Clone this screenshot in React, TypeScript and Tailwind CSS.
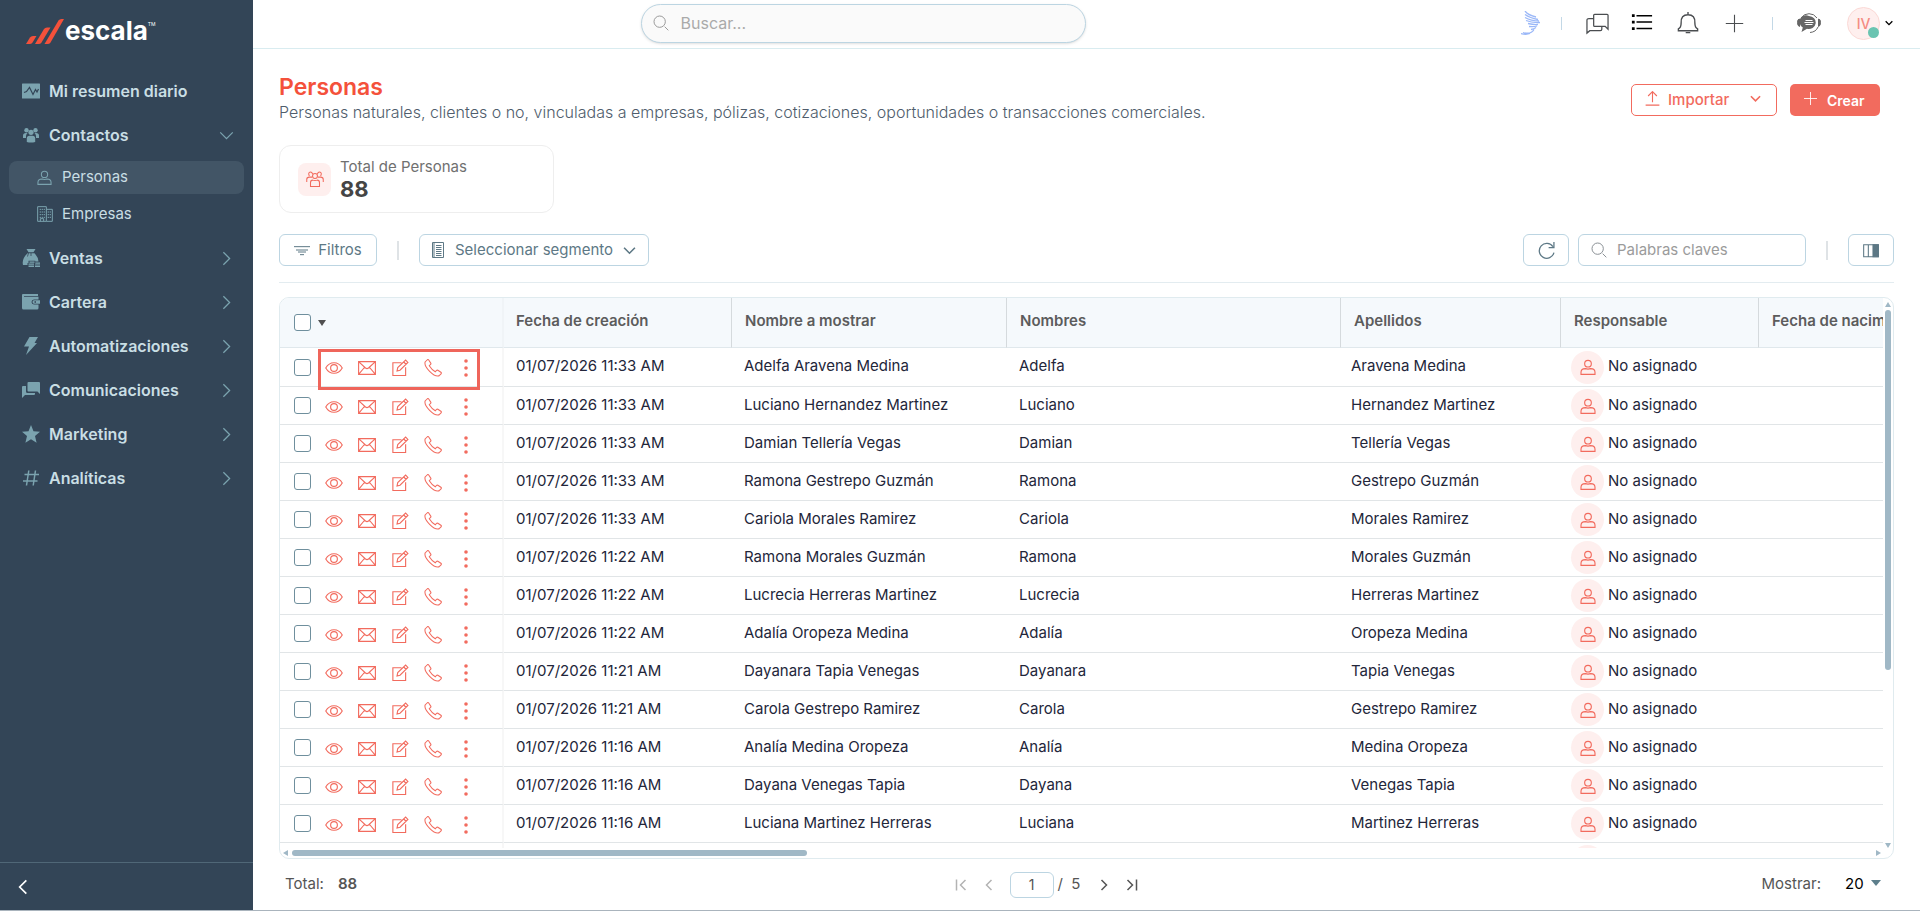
import type { ReactNode } from 'react';

const menu = [
    { label: 'Mi resumen diario', icon: 'chart', state: 'none' },
    { label: 'Contactos', icon: 'people', state: 'open' },
    { label: 'Ventas', icon: 'bag', state: 'closed' },
    { label: 'Cartera', icon: 'wallet', state: 'closed' },
    { label: 'Automatizaciones', icon: 'bolt', state: 'closed' },
    { label: 'Comunicaciones', icon: 'chat', state: 'closed' },
    { label: 'Marketing', icon: 'star', state: 'closed' },
    { label: 'Analíticas', icon: 'hash', state: 'closed' },
];

const people = [
    { date: '01/07/2026 11:33 AM', first: 'Adelfa', last: 'Aravena Medina' },
    { date: '01/07/2026 11:33 AM', first: 'Luciano', last: 'Hernandez Martinez' },
    { date: '01/07/2026 11:33 AM', first: 'Damian', last: 'Tellería Vegas' },
    { date: '01/07/2026 11:33 AM', first: 'Ramona', last: 'Gestrepo Guzmán' },
    { date: '01/07/2026 11:33 AM', first: 'Cariola', last: 'Morales Ramirez' },
    { date: '01/07/2026 11:22 AM', first: 'Ramona', last: 'Morales Guzmán' },
    { date: '01/07/2026 11:22 AM', first: 'Lucrecia', last: 'Herreras Martinez' },
    { date: '01/07/2026 11:22 AM', first: 'Adalía', last: 'Oropeza Medina' },
    { date: '01/07/2026 11:21 AM', first: 'Dayanara', last: 'Tapia Venegas' },
    { date: '01/07/2026 11:21 AM', first: 'Carola', last: 'Gestrepo Ramirez' },
    { date: '01/07/2026 11:16 AM', first: 'Analía', last: 'Medina Oropeza' },
    { date: '01/07/2026 11:16 AM', first: 'Dayana', last: 'Venegas Tapia' },
    { date: '01/07/2026 11:16 AM', first: 'Luciana', last: 'Martinez Herreras' },
    { date: '', first: '', last: '' },
];

const headers = ['Fecha de creación', 'Nombre a mostrar', 'Nombres', 'Apellidos', 'Responsable', 'Fecha de nacimiento'];

function Line({ className, children, width = 1 }: { className: string; children: ReactNode; width?: number }) {
    return (
        <svg viewBox="0 0 24 24" fill="none" stroke="currentColor" strokeWidth={width} className={`shrink-0 ${className}`} aria-hidden="true">
            {children}
        </svg>
    );
}

function Solid({ className, children }: { className: string; children: ReactNode }) {
    return (
        <svg viewBox="0 0 18 18" fill="currentColor" className={`shrink-0 ${className}`} aria-hidden="true">
            {children}
        </svg>
    );
}

function Chevron({ dir, className, width = 2 }: { dir: 'down' | 'right' | 'left'; className: string; width?: number }) {
    const d = { down: 'M2 7l10 10L22 7', right: 'M7 2l10 10L7 22', left: 'M17 2L7 12l10 10' }[dir];
    return <Line className={className} width={width}><path d={d} /></Line>;
}

function MenuIcon({ name }: { name: string }) {
    const box = 'size-[18px]';
    switch (name) {
        case 'chart':
            return (
                <Solid className={box}>
                    <rect y="1.5" width="18" height="15" rx="0.5" />
                    <path d="M2 10.5l2.5-1 3-4 3.5 7 2.5-5 1.5 2.5 1.5-3" fill="none" stroke="#334557" strokeWidth="1.2" />
                </Solid>
            );
        case 'people':
            return (
                <Solid className={box}>
                    <circle cx="4.5" cy="4.2" r="2.2" />
                    <circle cx="13.5" cy="4.2" r="2.2" />
                    <path d="M1 12V9.5Q1 7 4 7l1.5.3Q4 8.500 4 10v2zM17 12V9.500Q17 7 14 7l-1.5.3Q14 8.500 14 10v2z" />
                    <circle cx="9" cy="6.300" r="2.600" />
                    <path d="M4.800 16v-3.500Q4.800 9.800 7.500 9.800h3q2.700 0 2.700 2.700V16q-4.200 1.200-8.400 0z" />
                </Solid>
            );
        case 'bag':
            return (
                <Solid className={box}>
                    <path d="M4.500 0h9l-2 3.300h-5zM5.500 4.200h7q4 4.300 4 8.300h-3.200v-.8H6.500V14h-1v2H1Q-.5 10 5.500 4.200z" />
                    <path d="M7.500 12.500h5v1.300h-5zM13.300 13.500H18v1.300h-4.700zM6.500 14.600h5.500v1.200H6.500zM6.500 16.500h5.500V18H6.500zM13 15.500h5v1h-5zM13 17.100h5v.9h-5z" />
                    <path d="M6.500 4l-1 3.500M9 4v3" stroke="#334557" strokeWidth=".8" />
                </Solid>
            );
        case 'wallet':
            return (
                <Solid className={box}>
                    <path d="M1 1h15v2H2v.8h14.500v2.700H12Q9.500 6.700 9.500 9t2.500 2.500h4.500V15q0 1.500-1.500 1.500H1.500Q0 16.500 0 15V2q0-1 1-1z" />
                    <path fillRule="evenodd" d="M12 7.300h6v3.500h-6Q10.500 10.500 10.500 9T12 7.300zm.5 1v1.500H14V8.300z" />
                </Solid>
            );
        case 'bolt':
            return <Solid className={box}><path d="M7.500 0H16l-3.500 6H15L4 18l3-8.500H2z" /></Solid>;
        case 'chat':
            return (
                <Solid className={box}>
                    <path d="M6.500 1H17q1 0 1 1v11l-2.500-2.500h-9q-1 0-1-1V2q0-1 1-1z" />
                    <path d="M1 5h3v5.500Q4 12 5.500 12H13v1q0 1-1 1H3l-3 3V6q0-1 1-1z" />
                </Solid>
            );
        case 'star':
            return <Solid className={box}><path d="M9 0l2.500 6.200 6.500.5-5 4.300 1.600 6.700L9 14.200l-5.600 3.500L5 11 0 6.700l6.500-.5z" /></Solid>;
        default:
            return (
                <Solid className={box}>
                    <path d="M6.800 1.500L4.500 16.500M13.500 1.500l-2.300 15M2.500 5.500h14.500M1 12h14.500" fill="none" stroke="currentColor" strokeWidth="1.500" />
                </Solid>
            );
    }
}

function UserIcon({ className }: { className: string }) {
    return (
        <Line className={className} width={1.7}>
            <circle cx="12" cy="7" r="5" />
            <path d="M1.500 23v-3Q1.500 14.500 8 14.500q4 1.200 8 0 6.500 0 6.500 5.500v3z" />
        </Line>
    );
}

function SearchIcon({ className }: { className: string }) {
    return (
        <Line className={className} width={1.500}>
            <circle cx="10" cy="10" r="8.500" />
            <path d="M17.500 17.500L23 23" />
        </Line>
    );
}

function Sidebar() {
    return (
        <aside className="flex w-[253px] shrink-0 flex-col bg-[#334557]">
            <div className="flex h-[62px] items-center pl-[26px]">
                <svg viewBox="0 0 38 25" className="h-[25px] w-[38px]" fill="#f4513b" aria-hidden="true">
                    <path d="M0 25L4 18.500q1-1.500 3-1.500h3.500L6.500 23.500Q5.500 25 3.500 25z" />
                    <path d="M9 25L18 10q1-1.500 3-1.500h3.500L15.500 23.500Q14.500 25 12.500 25z" />
                    <path d="M18.500 25L32.500 1.500Q33.500 0 35.500 0H38L24.500 23.500Q23.500 25 21.500 25z" />
                </svg>
                <span className="ml-px text-[26px] leading-8 font-bold text-white">escala</span>
                <span className="mb-3 text-[5px] text-white">TM</span>
            </div>

            <nav className="mt-[7px] flex flex-1 flex-col">
                {menu.map((item) => (
                    <div key={item.label}>
                        <button type="button" className="flex h-11 w-full items-center pr-[19px] pl-[22px] text-[#c9dee4]">
                            <span className="text-[#7ba3af]"><MenuIcon name={item.icon} /></span>
                            <span className="ml-[9px] flex-1 text-left text-[16px] font-semibold">{item.label}</span>
                            {item.state !== 'none' && (
                                <Chevron dir={item.state === 'open' ? 'down' : 'right'} className="size-[15px] text-[#7ba3af]" />
                            )}
                        </button>
                        {item.state === 'open' && (
                            <div className="px-[9px] pt-1 pb-1">
                                <a href="#personas" className="flex h-[33px] items-center rounded-lg bg-[#425566] pl-7 text-[15px] text-[#c9dee4]">
                                    <UserIcon className="size-[15px] text-[#7ba3af]" />
                                    <span className="ml-[10px]">Personas</span>
                                </a>
                                <a href="#empresas" className="mt-[3px] mb-px flex h-[34px] items-center pl-7 text-[15px] text-[#c9dee4]">
                                    <Line className="size-4 text-[#7ba3af]" width={1.500}>
                                        <path d="M1 1h13v22H1zM14 5h9v18h-9M5 23v-4h5v4" />
                                        <path d="M4 5h8M4 9h8M4 13h8M4 17h8M16 9h5M16 13h5M16 17h5" strokeDasharray="2 1" />
                                    </Line>
                                    <span className="ml-[9px]">Empresas</span>
                                </a>
                            </div>
                        )}
                    </div>
                ))}
            </nav>

            <div className="flex h-12 items-center border-t border-[#506777] pl-[15px]">
                <button type="button" aria-label="Contraer menú" className="text-white">
                    <Chevron dir="left" className="size-4" width={2.500} />
                </button>
            </div>
        </aside>
    );
}

function TopBar() {
    return (
        <header className="flex h-[49px] shrink-0 items-center border-b border-[#d9ecf0]">
            <div className="flex flex-1 justify-center pr-[36px]">
                <label className="mb-[2px] flex h-[39px] w-[445px] items-center rounded-full border border-[#bcd5e2] bg-[#fafafa] pl-[11px] shadow-sm">
                    <SearchIcon className="size-4 text-[#9a9a9a]" />
                    <input aria-label="Buscar" placeholder="Buscar..." className="ml-3 flex-1 bg-transparent text-[16px] outline-none placeholder:text-[#aaaaaa]" />
                </label>
            </div>
            <div className="flex w-[411px] items-center pb-[2px] text-[#4a4d50]">
                <button type="button" aria-label="Asistente" className="ml-3">
                    <svg viewBox="0 0 20 24" className="h-6 w-5" fill="none" stroke="#9bb8f8" strokeWidth="1.300" aria-hidden="true">
                        <path d="M4 0q3 4 11 6M4 3.500q5 3.500 13 5M4 6.500q6 3.500 14 3.500M5 9.500q6 2.500 14 2M7 12.500q6 1.500 10 1M8 15.500q5 .5 8-.5M10 18.500q3-.5 5-2M2 21.500q8 2.500 11-3M0 22.500q5 1.500 9 0" />
                    </svg>
                </button>
                <span className="ml-[20px] h-[13px] w-px bg-[#c3d8e6]" />
                <button type="button" aria-label="Conversaciones" className="ml-[24px]">
                    <Line className="size-[23px]" width={1.300}>
                        <path d="M8 3.500q0-1 1-1h13q1 0 1 1V18l-3-3H9q-1 0-1-1zM8 7H3Q1 7 1 8.500V22l3-2.500h11q1.500 0 1.500-1.500v-3" />
                    </Line>
                </button>
                <button type="button" aria-label="Lista" className="ml-[22px] text-black">
                    <Line className="size-[22px]" width={1.700}>
                        <path d="M6 4h17M6 11h17M6 18h17" />
                        <path d="M1 4h3M1 11h3M1 18h3" strokeWidth="3" />
                    </Line>
                </button>
                <button type="button" aria-label="Notificaciones" className="ml-[24px]">
                    <Line className="size-[22px]" width={1.500}>
                        <path d="M12 0v3M2 20.500h20.500v-2Q19.500 17 19.500 12 20 3 12 3T4.500 12Q4.500 17 1.500 18.500v2zM9.500 22.500h5" />
                    </Line>
                </button>
                <button type="button" aria-label="Agregar" className="ml-[26px]">
                    <Line className="size-[19px]" width={1.400}><path d="M12 1v22M1 12h22" /></Line>
                </button>
                <span className="ml-[28px] h-[13px] w-px bg-[#c3d8e6]" />
                <button type="button" aria-label="Soporte" className="ml-[24px] text-[#666666]">
                    <svg viewBox="0 0 24 20" className="h-5 w-6" fill="none" stroke="currentColor" aria-hidden="true">
                        <path d="M4 5Q7 .7 12 .7T20 5M21 14q-2 5-8 5.500" />
                        <path d="M2.500 6v7.500Q.5 13 .5 9.500T2.500 6zM21.500 6v7.500q2-.5 2-4t-2-3.500z" fill="currentColor" />
                        <path d="M12 3a7 6.500 0 1 1-2 12.800L4.500 19l1.300-4.500A6.500 6.500 0 0 1 12 3z" fill="currentColor" stroke="none" />
                        <path d="M8.500 7.500h7M7.500 9.500h9M8.500 11.500h7" stroke="white" />
                    </svg>
                </button>
                <button type="button" aria-label="Cuenta" className="ml-[26px] flex items-center">
                    <span className="relative flex size-[33px] items-center justify-center rounded-full border border-[#fbd9d6] bg-[#feefee] text-[14px] font-medium text-[#f48b82]">
                        IV
                        <span className="absolute right-0 bottom-px size-[11px] rounded-full bg-[#6ac4b1]" />
                    </span>
                    <Chevron dir="down" className="ml-[5px] size-2 text-black" width={4} />
                </button>
            </div>
        </header>
    );
}

function Toolbar() {
    return (
        <div className="mt-[21px] flex items-center border-b border-[#e3ecf0] pb-4 text-[15px] text-[#5d7885]">
            <button type="button" className="flex h-8 w-[98px] items-center justify-center gap-2 rounded-[6px] border border-[#bcd5e2]">
                <Line className="size-4" width={1.500}><path d="M0 7h24M3 12h18M6 15h12M9 19h6" /></Line>
                Filtros
            </button>
            <span className="ml-[20px] h-[19px] w-[2px] bg-[#dfe3e6]" />
            <button type="button" className="ml-[20px] flex h-8 w-[230px] items-center rounded-[6px] border border-[#bcd5e2] px-3">
                <Line className="h-4 w-[12px]" width={2}>
                    <path d="M1-3h22v30H1z" />
                    <path d="M8 3h11M8 7h11M8 11h11M8 15h11M8 19h11M8 23h11" />
                    <path d="M4-2v28" />
                </Line>
                <span className="ml-[11px] flex-1 text-left">Seleccionar segmento</span>
                <Chevron dir="down" className="size-[13px]" width={3} />
            </button>
            <button type="button" aria-label="Actualizar" className="ml-auto flex h-8 w-[46px] items-center justify-center rounded-[6px] border border-[#bcd5e2]">
                <Line className="size-[17px]" width={1.800}>
                    <path d="M21 6.500A10.500 10.500 0 1 0 22.500 15M22.500 0v8H15" />
                </Line>
            </button>
            <label className="ml-[9px] flex h-8 w-[228px] items-center rounded-[6px] border border-[#bcd5e2] pl-3">
                <SearchIcon className="size-4 text-[#8b9196]" />
                <input aria-label="Palabras claves" placeholder="Palabras claves" className="ml-[10px] w-full min-w-0 bg-transparent outline-none placeholder:text-[#9b9b9b]" />
            </label>
            <span className="ml-[20px] h-[19px] w-[2px] bg-[#dfe3e6]" />
            <button type="button" aria-label="Columnas" className="ml-[20px] flex h-8 w-[46px] items-center justify-center rounded-[6px] border border-[#bcd5e2]">
                <Line className="size-4" width={1.600}>
                    <path d="M1 4h22v18H1zM8 4v18" />
                    <path d="M15 4h8v18h-8z" fill="currentColor" />
                </Line>
            </button>
        </div>
    );
}

const boxStyle = 'size-[17px] shrink-0 appearance-none rounded-[3px] border border-[#6f8f9d] bg-white';

function RowActions({ name, marked }: { name: string; marked: boolean }) {
    return (
        <div className="relative flex h-[37px] items-center pl-[14px] text-[#f26b5e]">
            <input type="checkbox" aria-label={`Seleccionar ${name}`} className={boxStyle} />
            <div className="ml-[14px] flex items-center gap-[15px] pt-[2px]">
                <button type="button" aria-label="Ver">
                    <Line className="size-[18px]" width={1.500}>
                        <path d="M1 12Q5 5 12 5t11 7q-4 7-11 7T1 12z" />
                        <circle cx="12" cy="12" r="4.500" />
                    </Line>
                </button>
                <button type="button" aria-label="Enviar correo">
                    <Line className="size-[18px]" width={1.500}>
                        <path d="M.8 3.500h22.400v17H.8zM.8 3.500L10 12q2 1.500 4 0l9.200-8.500M.8 20.500l8-9.500M23.200 20.500l-8-9.500" />
                    </Line>
                </button>
                <button type="button" aria-label="Editar">
                    <Line className="size-[18px]" width={1.500}>
                        <path d="M14 5H2.500v17h17V11M8 16l1-4.500L19.500 1.500l3 3L12 15zM17 4l3 3" />
                    </Line>
                </button>
                <button type="button" aria-label="Llamar">
                    <Line className="size-[18px]" width={1.400}>
                        <path d="M4.500 1L1.500 4Q0 9 7.500 16.500T20 22.500l3-3q.5-1-.5-1.800L18.500 15q-1-.5-1.800.3L15 17Q10.500 14.500 7 9l1.800-1.800q.8-.8.2-1.700L6.300 1.300q-.8-1-1.800-.3z" />
                    </Line>
                </button>
                <button type="button" aria-label="Más acciones">
                    <svg viewBox="0 0 18 18" className="size-[18px]" fill="currentColor" aria-hidden="true">
                        <circle cx="9" cy="2" r="1.800" />
                        <circle cx="9" cy="9" r="1.800" />
                        <circle cx="9" cy="16" r="1.800" />
                    </svg>
                </button>
            </div>
            {marked && <div className="pointer-events-none absolute top-0 left-[38px] z-10 h-[41px] w-[162px] border-[3px] border-[#ef655b]" />}
        </div>
    );
}

function PeopleTable() {
    return (
        <div className="mt-[14px] flex min-h-0 flex-1 flex-col overflow-hidden rounded-[10px] border border-[#e0ebef]">
            <div className="flex min-h-0 flex-1">
                <div className="min-w-0 flex-1 overflow-hidden">
                    <table className="w-[1740px] table-fixed border-separate border-spacing-0 text-left text-[15px]">
                        <colgroup>
                            <col className="w-[224px]" />
                            <col className="w-[228px]" />
                            <col className="w-[275px]" />
                            <col className="w-[334px]" />
                            <col className="w-[220px]" />
                            <col className="w-[198px]" />
                            <col />
                        </colgroup>
                        <thead className="bg-[#f5f9fc] text-[#5c5c5c]">
                            <tr className="h-[50px]">
                                <th className="border-r-2 border-b border-r-[#f0f4f7] border-b-[#e0e8ec] pl-[14px]">
                                    <div className="flex items-center">
                                        <input type="checkbox" aria-label="Seleccionar todo" className={boxStyle} />
                                        <svg viewBox="0 0 8 6" className="ml-[7px] h-[6px] w-2" fill="#505050" aria-hidden="true"><path d="M0 0h8L4 6z" /></svg>
                                    </div>
                                </th>
                                {headers.map((header, i) => (
                                    <th key={header} className={`border-r border-b border-r-[#d5dadd] border-b-[#e0e8ec] pb-[2px] font-semibold whitespace-nowrap ${i === 0 ? 'pl-3' : 'pl-[13px]'}`}>
                                        {header}
                                    </th>
                                ))}
                            </tr>
                        </thead>
                        <tbody className="text-[#23263a] [&_td]:border-b [&_td]:border-[#e1e5e7] [&_td]:p-0">
                            {people.map((person, i) => (
                                <tr key={i} className={i === 0 ? 'h-[39px]' : 'h-[38px]'}>
                                    <td className="border-r-2 !border-r-[#f7f7f7]"><RowActions name={`${person.first} ${person.last}`} marked={i === 0} /></td>
                                    <td><div className="pb-px pl-3">{person.date}</div></td>
                                    <td><div className="pb-px pl-3">{person.first} {person.last}</div></td>
                                    <td><div className="pb-px pl-3">{person.first}</div></td>
                                    <td><div className="pb-px pl-[10px]">{person.last}</div></td>
                                    <td>
                                        <div className="flex items-center gap-1 pl-[10px]">
                                            <span className="flex size-[33px] items-center justify-center rounded-full bg-[#feefee] text-[#f26b5e]">
                                                <UserIcon className="size-4" />
                                            </span>
                                            {person.date && <span className="pb-px">No asignado</span>}
                                        </div>
                                    </td>
                                    <td />
                                </tr>
                            ))}
                        </tbody>
                    </table>
                </div>
                <div className="flex w-[10px] flex-col items-center pt-1 pr-px text-[#a0b8c6]">
                    <svg viewBox="0 0 6 5" className="h-[5px] w-[6px]" fill="currentColor" aria-hidden="true"><path d="M3 0l3 5H0z" /></svg>
                    <div className="mt-[3px] h-[66%] w-[6px] rounded-full bg-[#a0b8c6]" />
                    <svg viewBox="0 0 6 5" className="mt-auto h-[5px] w-[6px]" fill="currentColor" aria-hidden="true"><path d="M0 0h6L3 5z" /></svg>
                </div>
            </div>
            <div className="flex h-[10px] shrink-0 items-center pr-[12px] pl-[3px] text-[#a0b8c6]">
                <svg viewBox="0 0 5 6" className="h-[6px] w-[5px]" fill="currentColor" aria-hidden="true"><path d="M5 0v6L0 3z" /></svg>
                <div className="ml-1 h-[6px] w-[515px] rounded-full bg-[#a0b8c6]" />
                <svg viewBox="0 0 5 6" className="ml-auto h-[6px] w-[5px]" fill="currentColor" aria-hidden="true"><path d="M0 0v6l5-3z" /></svg>
            </div>
        </div>
    );
}

function Pager() {
    return (
        <footer className="grid h-[51px] shrink-0 grid-cols-3 items-center text-[15px] text-[#555555]">
            <div className="flex gap-[14px] pl-[6px]">
                <span>Total:</span>
                <span className="font-semibold">88</span>
            </div>
            <div className="flex items-center justify-center pr-20">
                <button type="button" aria-label="Primera página" disabled className="text-[#b3b3b3]">
                    <Line className="size-3" width={3}><path d="M3 1v22M21 2L11 12l10 10" /></Line>
                </button>
                <button type="button" aria-label="Página anterior" disabled className="ml-[16px] text-[#b3b3b3]">
                    <Chevron dir="left" className="size-3" width={3} />
                </button>
                <input aria-label="Página" defaultValue="1" className="ml-[15px] h-[26px] w-11 rounded-[6px] border border-[#bcd5e2] text-center text-[14px] outline-none" />
                <span className="ml-1">/&nbsp; 5</span>
                <button type="button" aria-label="Página siguiente" className="ml-[18px]">
                    <Chevron dir="right" className="size-3" width={3} />
                </button>
                <button type="button" aria-label="Última página" className="ml-[16px]">
                    <Line className="size-3" width={3}><path d="M21 1v22M3 2l10 10L3 22" /></Line>
                </button>
            </div>
            <div className="flex items-center justify-end pr-[13px]">
                <label htmlFor="page-size">Mostrar:</label>
                <select id="page-size" defaultValue="20" className="ml-6 w-[26px] appearance-none bg-transparent font-normal text-black">
                    <option>20</option>
                </select>
                <svg viewBox="0 0 10 6" className="mb-1 h-[6px] w-[10px]" fill="#5d7f8c" aria-hidden="true"><path d="M0 0h10L5 6z" /></svg>
            </div>
        </footer>
    );
}

export default function App() {
    return (
        <div className="flex h-screen border-b border-[#aab4bd] bg-white font-['Inter','Noto_Sans',sans-serif]">
            <Sidebar />
            <div className="flex min-w-0 flex-1 flex-col">
                <TopBar />
                <main className="flex min-h-0 flex-1 flex-col px-[26px] pt-[24px]">
                    <div className="flex items-start justify-between">
                        <div>
                            <h1 className="text-[23px] leading-7 font-semibold text-[#f4513b]">Personas</h1>
                            <p className="text-[16px] leading-[22px] font-light text-[#4f5d6c]">
                                Personas naturales, clientes o no, vinculadas a empresas, pólizas, cotizaciones, oportunidades o transacciones comerciales.
                            </p>
                        </div>
                        <div className="mt-[11px] mr-[14px] flex gap-[13px] text-[15px]">
                            <button type="button" className="flex h-8 w-[146px] items-center rounded-[5px] border border-[#f26b5e] px-[13px] font-medium text-[#f26b5e]">
                                <Line className="mb-1 size-[15px]" width={1.800}><path d="M12 18V1M5 8l7-7 7 7M1 22.500h22" /></Line>
                                <span className="ml-2 flex-1 text-left">Importar</span>
                                <Chevron dir="down" className="mr-[2px] mb-1 size-[11px]" width={3.500} />
                            </button>
                            <button type="button" className="flex h-8 w-[90px] items-center rounded-[5px] bg-[#f26b5e] px-[14px] text-[14px] font-semibold text-white">
                                <Line className="mb-1 size-[13px]" width={1.600}><path d="M12 0v24M0 12h24" /></Line>
                                <span className="ml-[10px]">Crear</span>
                            </button>
                        </div>
                    </div>

                    <section className="mt-[22px] flex h-[68px] w-[275px] shrink-0 items-center rounded-xl border border-[#eeeeee] pl-[18px]">
                        <span className="flex size-[33px] items-center justify-center rounded-lg bg-[#feefee] text-[#f26b5e]">
                            <Line className="size-[18px]" width={1.400}>
                                <circle cx="12" cy="8" r="3.300" />
                                <path d="M9 5.500Q7.500 2 5 3T4.500 8M15 5.500Q16.500 2 19 3t.5 5M1 16v-3.500Q1 9.500 4.500 9.500H8M23 16v-3.500q0-3-3.500-3H16M6 22v-5q0-3.500 3-3.500 3 1 6 0 3 0 3 3.500v5z" />
                            </Line>
                        </span>
                        <div className="ml-[9px]">
                            <p className="text-[15px] leading-5 text-[#707070]">Total de Personas</p>
                            <p className="text-[22px] leading-6 font-bold text-[#454545]">88</p>
                        </div>
                    </section>

                    <Toolbar />
                    <PeopleTable />
                    <Pager />
                </main>
            </div>
        </div>
    );
}
